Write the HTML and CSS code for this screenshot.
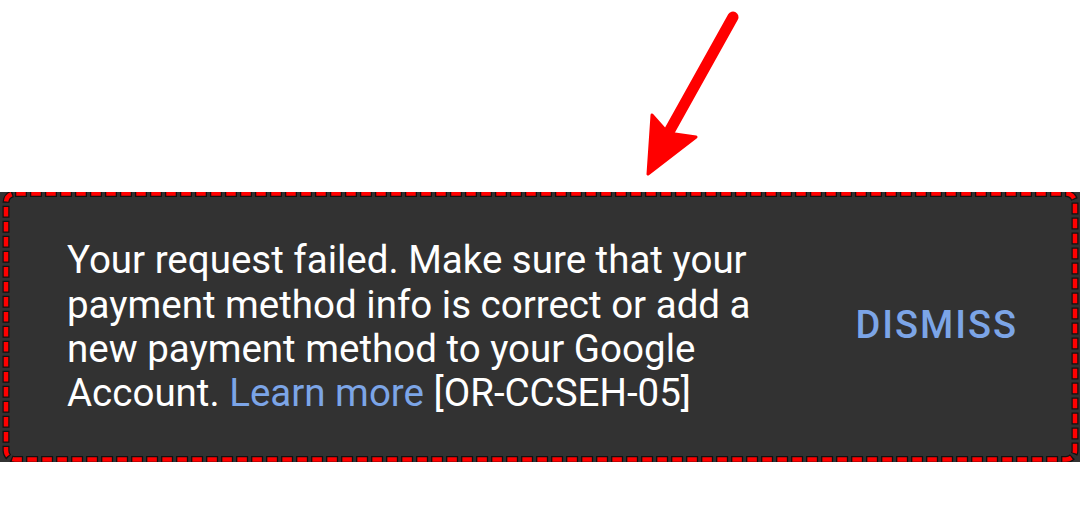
FILE: index.html
```html
<!DOCTYPE html>
<html>
<head>
	<title>Payment error</title>
	<link rel="stylesheet" href="styles.css">
</head>
<body>
<svg class="pointer" width="1080" height="200" viewBox="0 0 1080 200">
	<line x1="733" y1="17" x2="670" y2="130" stroke="#f00" stroke-width="11" stroke-linecap="round"/>
	<polygon points="648,174 652,115 668,133 696,137" fill="#f00" stroke="#f00" stroke-width="3" stroke-linejoin="round"/>
</svg>
<div class="snackbar">
	<svg class="outline" width="1080" height="270" viewBox="0 0 1080 270">
		<rect x="6" y="1.5" width="1069" height="266" rx="9" fill="none" stroke="#111" stroke-width="7" stroke-dasharray="12 3"/>
		<rect x="6" y="1.5" width="1069" height="266" rx="9" fill="none" stroke="#f00" stroke-width="4.5" stroke-dasharray="9.5 5.5" stroke-dashoffset="-1.25"/>
	</svg>
	<p class="msg">Your request failed. Make sure that your payment method info is correct or add a new payment method to your Google Account. <a class="link" href="#">Learn more</a> [OR-CCSEH-05]</p>
	<span class="action">DISMISS</span>
</div>
</body>
</html>
```

FILE: styles.css
```css
*{
	margin:0px;
	padding:0px;
}
body{
	background:#fff;
	font-family:Roboto, "Liberation Sans", sans-serif;
	width:1080px;
	height:506px;
	overflow:hidden;
	position:relative;
}
.pointer{
	position:absolute;
	top:0px;
	left:0px;
}
.snackbar{
	margin-top:192px;
	height:270px;
	background:#323232;
	position:relative;
	display:flex;
	align-items:center;
	justify-content:space-between;
	padding:0 62px 0 67px;
}
.outline{
	position:absolute;
	top:0px;
	left:0px;
}
.msg{
	width:700px;
	color:#fff;
	font-size:38.5px;
	line-height:44.4px;
}
.link{
	color:#7ca5e7;
	text-decoration:none;
}
.action{
	color:#7ca5e7;
	font-size:38px;
	font-weight:500;
	letter-spacing:2px;
	margin-top:-4px;
}
```
